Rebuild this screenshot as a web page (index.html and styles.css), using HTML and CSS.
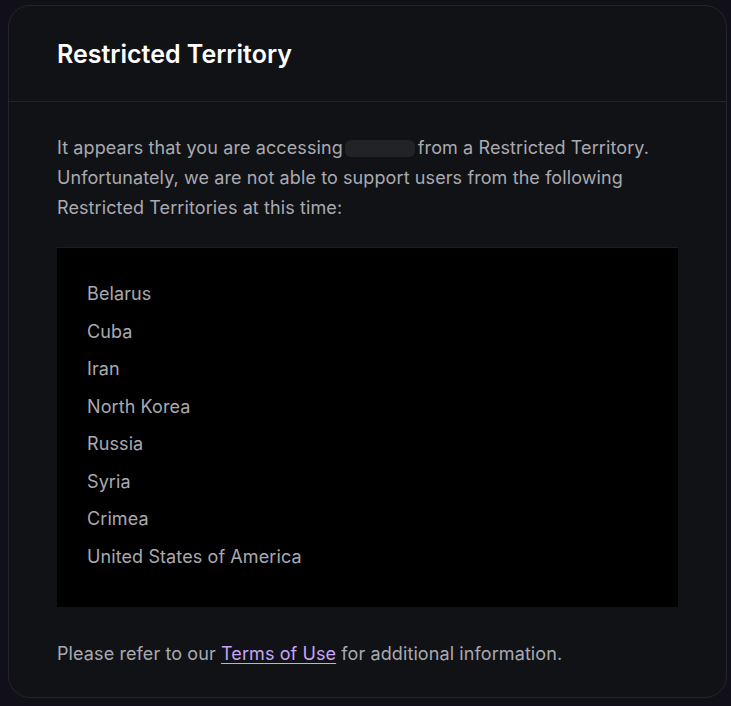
FILE: index.html
```html
<!DOCTYPE html>
<html lang="en">
<head>
<meta charset="utf-8">
<title>Restricted Territory</title>
<link rel="stylesheet" href="styles.css">
</head>
<body>
<div class="card">
  <div class="card-header">
    <h1 class="title">Restricted Territory</h1>
  </div>
  <div class="card-body">
    <p class="text">It appears that you are accessing<span class="redact"></span>from a Restricted Territory. Unfortunately, we are not able to support users from the following Restricted Territories at this time:</p>
    <ul class="list">
      <li>Belarus</li>
      <li>Cuba</li>
      <li>Iran</li>
      <li>North Korea</li>
      <li>Russia</li>
      <li>Syria</li>
      <li>Crimea</li>
      <li>United States of America</li>
    </ul>
    <p class="text footer">Please refer to our <a class="link" href="#">Terms of Use</a> for additional information.</p>
  </div>
</div>
</body>
</html>
```
FILE: styles.css
```css
html, body {
  margin: 0;
  padding: 0;
  background: #110f19;
  font-family: Inter, "Noto Sans", sans-serif;
}
body {
  padding: 5px 4px 8px 8px;
}
.card {
  box-sizing: border-box;
  width: 719px;
  height: 693px;
  background: #111216;
  border: 1px solid #24252b;
  border-radius: 22px;
}
.card-header {
  height: 96px;
  box-sizing: border-box;
  border-bottom: 1px solid #24252b;
  padding: 0 48px;
  display: flex;
  align-items: center;
}
.title {
  margin: 0;
  font-size: 25px;
  font-weight: 600;
  color: #ffffff;
  letter-spacing: 0;
}
.card-body {
  padding: 31px 48px 0 48px;
}
.text {
  margin: 0;
  font-size: 18px;
  line-height: 30px;
  color: #a9aab1;
  letter-spacing: 0.1px;
}
.redact {
  display: inline-block;
  width: 70px;
  height: 17px;
  margin: 0 3px 0 2px;
  vertical-align: -3px;
  border-radius: 6px;
  background: #222327;
}
.list {
  list-style: none;
  margin: 24px 0 0 0;
  padding: 27px 30px 34px 30px;
  background: #000000;
  border-top: 1px solid #1c1d22;
  height: 360px;
  box-sizing: border-box;
}
.list li {
  font-size: 18px;
  line-height: 37.5px;
  color: #a9aab1;
  letter-spacing: 0.1px;
}
.footer {
  margin-top: 32px;
}
.link {
  color: #c7a4f7;
  text-decoration: underline;
  text-underline-offset: 3px;
}
```
